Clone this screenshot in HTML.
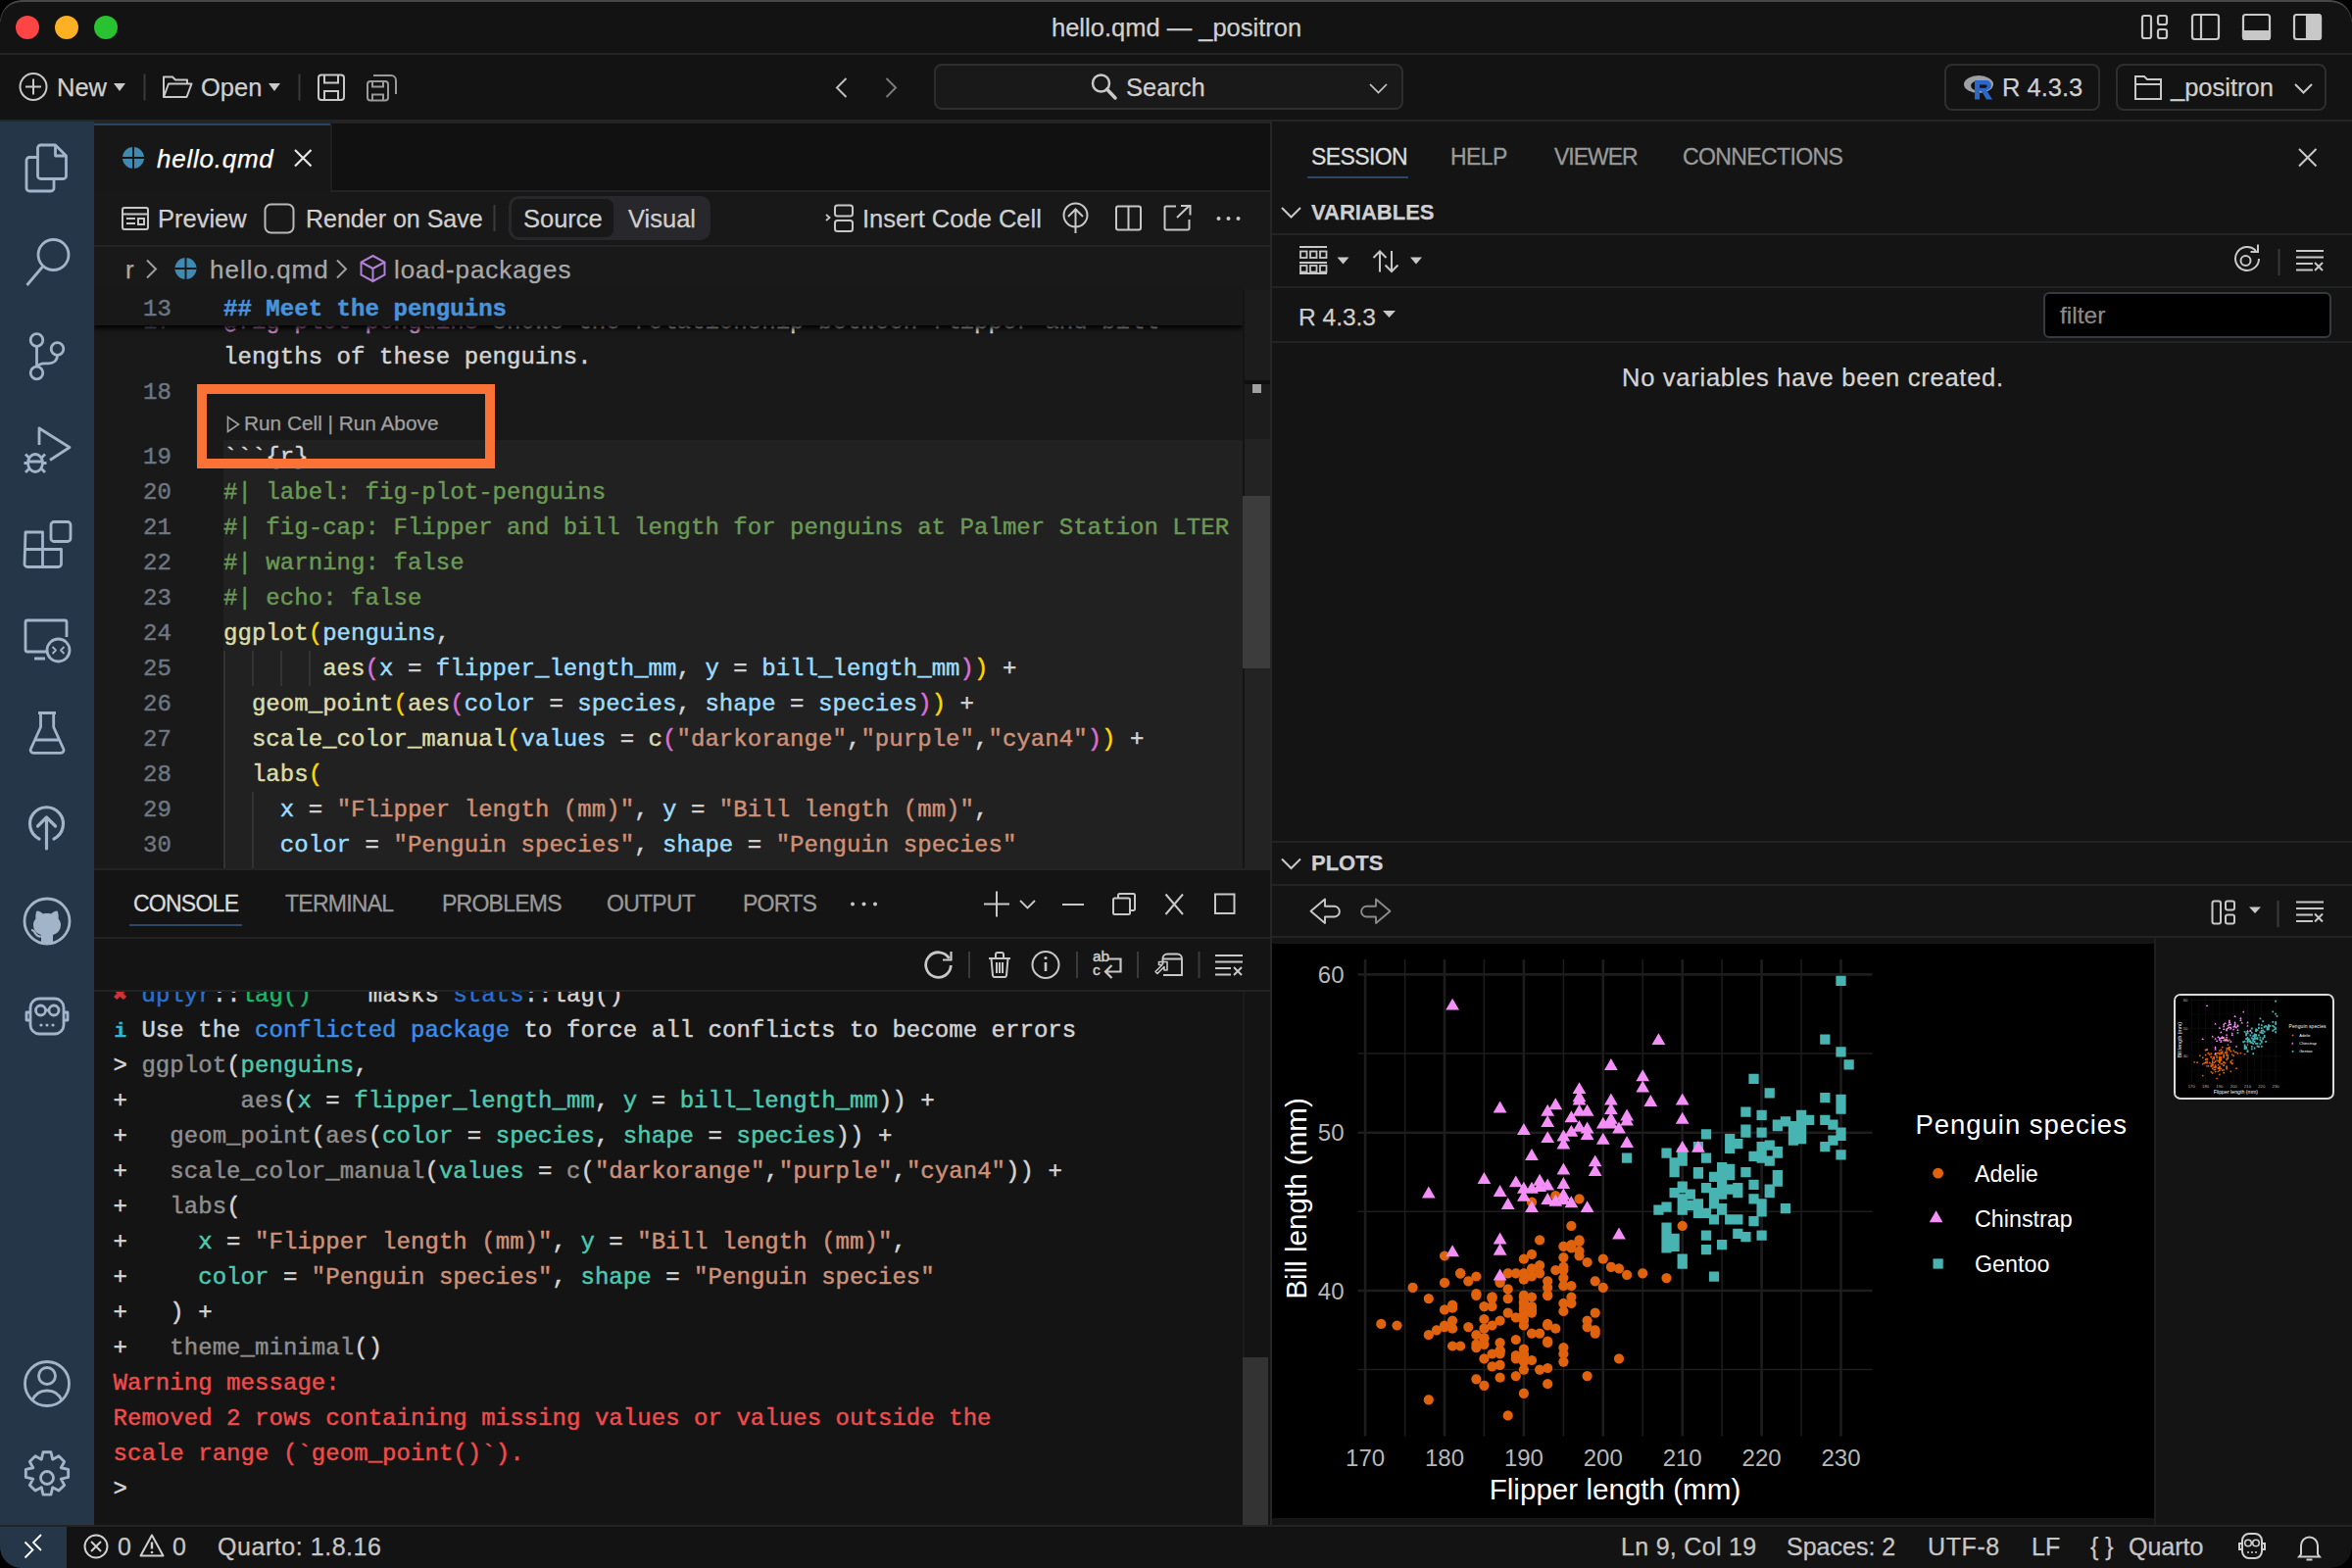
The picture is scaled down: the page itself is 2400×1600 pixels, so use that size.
<!DOCTYPE html>
<html><head><meta charset="utf-8">
<style>
*{margin:0;padding:0;box-sizing:border-box}
html,body{width:2400px;height:1600px;overflow:hidden;background:#000}
body{font-family:"Liberation Sans",sans-serif;color:#ccc}
.a{position:absolute}
#win{position:absolute;left:0;top:0;width:2400px;height:1600px;background:#131313;border-radius:22px;overflow:hidden}
.mono{font-family:"Liberation Mono",monospace;font-size:24px;white-space:pre;letter-spacing:0.05px;-webkit-text-stroke:0.45px currentColor}
.t{white-space:pre;line-height:1;-webkit-text-stroke:0.25px currentColor}
svg{position:absolute;overflow:visible}
</style></head><body>
<div id="win">
<!-- top window border -->

<!-- title bar -->
<div class="a" style="left:16px;top:16px;width:24px;height:24px;border-radius:50%;background:#fe4543"></div>
<div class="a" style="left:56px;top:16px;width:24px;height:24px;border-radius:50%;background:#feb024"></div>
<div class="a" style="left:96px;top:16px;width:24px;height:24px;border-radius:50%;background:#29c231"></div>
<div class="a t" id="title" style="left:1073px;top:16px;font-size:25.5px;color:#d0d0d0">hello.qmd — _positron</div>
<div class="a" style="left:0;top:54px;width:2400px;height:2px;background:#232323"></div>

<!-- toolbar -->
<svg style="left:0;top:0" width="2400" height="124" fill="none" stroke="#c8c8c8" stroke-width="2">
 <circle cx="34" cy="88.5" r="13.5"/>
 <path d="M26 88.5h16M34 80.5v16"/>
 <path d="M116 85h12l-6 8z" fill="#c8c8c8" stroke="none"/>
 <path d="M147.5 75.5v27" stroke="#3a3a3a"/>
 <path d="M167 99V78.5h9l3 3h12v4.5M167 99l5-13.5h23.5L190.5 99z" stroke-linejoin="round"/>
 <path d="M274 85h12l-6 8z" fill="#c8c8c8" stroke="none"/>
 <path d="M305.5 75.5v27" stroke="#3a3a3a"/>
 <rect x="325" y="76.5" width="26" height="25.5" rx="3"/>
 <path d="M331 76.5v8h14v-8M331 102v-9h14v9"/>
 <g stroke="#9a9a9a"><rect x="375" y="83" width="21" height="19.5" rx="3"/><path d="M380 83v5.5h11V83M380 102.5v-6h11v6M381 77h18a5 5 0 0 1 5 5v14"/></g>
 <path d="M863.5 80l-9.5 9.5 9.5 9.5" stroke="#c0c0c0"/><path d="M904.5 80l9.5 9.5-9.5 9.5" stroke="#7a7a7a"/>
 <circle cx="1123.5" cy="85" r="8.5" stroke-width="2.5"/>
 <path d="M1129.5 91l8.5 9" stroke-width="3.5" stroke-linecap="round"/>
 <path d="M1398 86l8.5 8.5 8.5-8.5"/>
</svg>
<div class="a" style="left:953px;top:65px;width:479px;height:47px;border:2px solid #2e2e2e;border-radius:8px;background:#191919"></div>
<svg style="left:0;top:0" width="2400" height="124" fill="none" stroke="#c8c8c8" stroke-width="2">
 <circle cx="1123.5" cy="85" r="8.5" stroke-width="2.5"/>
 <path d="M1129.5 91l8.5 9" stroke-width="3.5" stroke-linecap="round"/>
 <path d="M1398 86l8.5 8.5 8.5-8.5" stroke-width="1.7"/>
</svg>
<div class="a t" style="left:58px;top:77px;font-size:25.5px;color:#cfcfcf">New</div>
<div class="a t" style="left:205px;top:77px;font-size:25.5px;color:#cfcfcf">Open</div>
<div class="a t" style="left:1149px;top:77px;font-size:25.5px;color:#cfcfcf">Search</div>
<!-- layout icons top-right -->
<svg style="left:0;top:0" width="2400" height="60" fill="none" stroke="#c8c8c8" stroke-width="2.2">
 <rect x="2186" y="16" width="9" height="23" rx="2"/><rect x="2202" y="16" width="9" height="9" rx="2"/><rect x="2202" y="30" width="9" height="9" rx="2"/>
 <rect x="2237" y="15" width="27" height="25" rx="2.5"/><path d="M2246 15v25"/>
 <rect x="2289" y="15" width="27" height="25" rx="2.5"/><path d="M2289 32h27v6a2 2 0 0 1-2 2h-23a2 2 0 0 1-2-2z" fill="#c8c8c8"/>
 <rect x="2341" y="15" width="27" height="25" rx="2.5"/><path d="M2354 15h11.5a2.5 2.5 0 0 1 2.5 2.5v20a2.5 2.5 0 0 1-2.5 2.5H2354z" fill="#c8c8c8"/>
</svg>
<!-- R button & folder -->
<div class="a" style="left:1984px;top:65px;width:159px;height:48px;border:2px solid #2e2e2e;border-radius:8px"></div>
<div class="a" style="left:2159px;top:65px;width:215px;height:48px;border:2px solid #2e2e2e;border-radius:8px"></div>
<svg style="left:0;top:0" width="2400" height="124">
 <ellipse cx="2019" cy="86" rx="15" ry="9" fill="#9ea0a6"/>
 <ellipse cx="2021" cy="87.5" rx="10" ry="5.5" fill="#131313"/>
 <path d="M2015 82h12a5 5 0 0 1 0 10l6 9.5h-6l-5-8.5h-2v8.5h-5z" fill="#2a67c8"/>
 <path d="M2020 86.5h6a1.6 1.6 0 0 1 0 3.2h-6z" fill="#131313"/>
 <g fill="none" stroke="#c8c8c8" stroke-width="2"><path d="M2179 101V78h9l3 3h14v20zM2179 86h26"/><path d="M2342 86l8.5 8.5 8.5-8.5"/></g>
</svg>
<div class="a t" style="left:2043px;top:77px;font-size:25.5px;color:#cfcfcf">R 4.3.3</div>
<div class="a t" style="left:2215px;top:77px;font-size:25.5px;color:#cfcfcf">_positron</div>

<!-- toolbar bottom border -->
<div class="a" style="left:0;top:122px;width:2400px;height:2px;background:#252525"></div>

<!-- activity bar -->
<div class="a" style="left:0;top:124px;width:96px;height:1432px;background:#253648"></div>

<!-- activity icons -->
<svg style="left:0;top:0" width="96" height="1560" fill="none" stroke="#a2b4c7" stroke-width="2.8" stroke-linejoin="round">
 <path d="M38.5 160.5H30a3 3 0 0 0-3 3V192a3 3 0 0 0 3 3h22a3 3 0 0 0 3-3v-9.5"/>
 <path d="M38.5 151a3 3 0 0 1 3-3h15l11 11v20.5a3 3 0 0 1-3 3H41.5a3 3 0 0 1-3-3zM56.5 148v11h11"/>
 <circle cx="54.5" cy="260" r="15.5"/><path d="M44 271.5L27.5 291"/>
 <circle cx="37.5" cy="347" r="6.3"/><circle cx="37.5" cy="380.5" r="6.3"/><circle cx="58.5" cy="356" r="6.3"/>
 <path d="M37.5 353.3v21M58.5 362.3c0 6-4 8.5-9 8.5h-4c-4 0-7 2-8 4"/>
 <path d="M40 454V437l31 19.5-20 13"/>
 <ellipse cx="36" cy="472.5" rx="7.5" ry="9"/><path d="M28.5 471h15M24.5 472.5h4M43.5 472.5h4M26 463.5l4 4M46 463.5l-4 4M26 482l4-4M46 482l-4-4"/>
 <path d="M26 543h17.5v35.5H28a3 3 0 0 1-3-3zM25 560.5h37.5v15a3 3 0 0 1-3 3H43.5M43.5 543v35.5"/>
 <rect x="52" y="532.5" width="20" height="20" rx="3"/>
 <path d="M68 650V635a2 2 0 0 0-2-2H28a2 2 0 0 0-2 2v28a2 2 0 0 0 2 2h19M35 672h11"/>
 <circle cx="59.5" cy="663.5" r="11.5"/><path d="M53.5 660l3.5 3.5-3.5 3.5M65.5 660l-3.5 3.5 3.5 3.5" stroke-width="1.8"/>
 <path d="M39 727.5h18M41.5 727.5V742l-10 22a3 3 0 0 0 2.7 4.3h27.8a3 3 0 0 0 2.7-4.3l-10-22V727.5M35.5 755h25"/>
 <path d="M40 856a17 17 0 1 1 15 0M47.5 866V834M38.5 843l9-9 9 9" stroke-linecap="round" stroke-width="3.2"/>
 <circle cx="48" cy="940" r="23"/>
 <path d="M42 963v-9c-5-1.5-8-5-8-10.5 0-2.5 1-4.5 2.5-6-.5-2 0-6 1-8 2.5 0 5 1.5 6.5 3 2.5-.6 5.5-.6 8 0 1.5-1.5 4-3 6.5-3 1 2 1.5 6 1 8 1.5 1.5 2.5 3.5 2.5 6 0 5.5-3 9-8 10.5v9z" fill="#a2b4c7" stroke="none"/>
 <path d="M42 955.5c-4 .5-5.5-2-6.5-4s-2-2.5-3.5-2.5" stroke-width="2.2"/>
 <path d="M31 1028a9 9 0 0 1 9-9h16a9 9 0 0 1 9 9v18a9 9 0 0 1-9 9H40a9 9 0 0 1-9-9zM31 1033h-4v8h4M65 1033h4v8h-4"/>
 <circle cx="41.5" cy="1031" r="5"/><circle cx="55" cy="1031" r="5"/><path d="M46.5 1031h3.5"/>
 <circle cx="42" cy="1046" r="1.6" fill="#a2b4c7" stroke="none"/><circle cx="48" cy="1046" r="1.6" fill="#a2b4c7" stroke="none"/><circle cx="54" cy="1046" r="1.6" fill="#a2b4c7" stroke="none"/>
 <circle cx="48" cy="1412" r="22.5"/><circle cx="48" cy="1404" r="8.5"/><path d="M33 1429c3-7 8-10 15-10s12 3 15 10"/>
 <path d="M44.5 1485h7l1.5 6.5 5.5-3 5 5-3 5.5 6.5 1.5v7l-6.5 1.5 3 5.5-5 5-5.5-3-1.5 6.5h-7l-1.5-6.5-5.5 3-5-5 3-5.5-6.5-1.5v-7l6.5-1.5-3-5.5 5-5 5.5 3z" transform="translate(48 1508) scale(1.14) translate(-48 -1508)" stroke-width="2.5"/>
 <circle cx="48" cy="1508" r="6.5"/>
</svg>

<!-- status bar -->
<div class="a" style="left:0;top:1558px;width:68px;height:42px;background:#253648"></div>
<svg style="left:0;top:1556px" width="2400" height="44" fill="none" stroke="#d0d0d0" stroke-width="2">
 <path d="M25.5 17.5l8 8-8 8M42 10l-8 8 8 8" stroke="#fff" stroke-width="1.8"/>
 <circle cx="98" cy="22" r="11.5"/><path d="M93 17l10 10M103 17l-10 10"/>
 <path d="M155 10.5l-11.5 21h23z" stroke-linejoin="round"/><path d="M155 17.5v7" stroke-width="2.4"/><circle cx="155" cy="28" r="1.3" fill="#d0d0d0" stroke="none"/>
 <path d="M2288 16a7 7 0 0 1 7-7h6a7 7 0 0 1 7 7v11a7 7 0 0 1-7 7h-6a7 7 0 0 1-7-7zM2288 19h-3v6h3M2308 19h3v6h-3"/>
 <circle cx="2294" cy="18.5" r="3.3" stroke-width="1.6"/><circle cx="2302" cy="18.5" r="3.3" stroke-width="1.6"/>
 <circle cx="2294" cy="28" r="1" fill="#d0d0d0" stroke="none"/><circle cx="2298" cy="28" r="1" fill="#d0d0d0" stroke="none"/><circle cx="2302" cy="28" r="1" fill="#d0d0d0" stroke="none"/>
 <path d="M2348 30v-9a8.5 8.5 0 0 1 17 0v9l2 2.5h-21zM2353.5 35.5h6"/>
</svg>
<div class="a t" style="left:120px;top:1565.5px;font-size:25px;color:#c6c6c6">0</div>
<div class="a t" style="left:176px;top:1565.5px;font-size:25px;color:#c6c6c6">0</div>
<div class="a t" style="left:222px;top:1565.5px;font-size:25px;letter-spacing:0.55px;color:#c6c6c6">Quarto: 1.8.16</div>
<div class="a t" style="left:1654px;top:1565.5px;font-size:25px;letter-spacing:0.3px;color:#c6c6c6">Ln 9, Col 19</div>
<div class="a t" style="left:1823px;top:1565.5px;font-size:25px;color:#c6c6c6">Spaces: 2</div>
<div class="a t" style="left:1967px;top:1565.5px;font-size:25px;letter-spacing:0.6px;color:#c6c6c6">UTF-8</div>
<div class="a t" style="left:2073px;top:1565.5px;font-size:25px;color:#c6c6c6">LF</div>
<div class="a t" style="left:2133px;top:1565.5px;font-size:25px;color:#c6c6c6">{ }</div>
<div class="a t" style="left:2172px;top:1565.5px;font-size:25px;color:#c6c6c6">Quarto</div>
<div class="a" style="left:0;top:1556px;width:2400px;height:2px;background:#232323"></div>

<!-- editor region -->
<div class="a" style="left:96px;top:124px;width:1200px;height:72px;background:#111111"></div>
<div class="a" style="left:337px;top:194px;width:959px;height:2px;background:#232323"></div>
<div class="a" style="left:96px;top:196px;width:1200px;height:56px;background:#181818"></div>
<div class="a" style="left:96px;top:250px;width:1200px;height:2px;background:#232323"></div>
<div class="a" style="left:96px;top:252px;width:1200px;height:634px;background:#191919"></div>

<!-- editor tab -->
<div class="a" style="left:96px;top:122px;width:1200px;height:4px;background:#242424"></div>
<div class="a" style="left:96px;top:126px;width:241px;height:2px;background:#2a4561"></div>
<div class="a" style="left:96px;top:128px;width:241px;height:68px;background:#171717"></div>
<div class="a" style="left:337px;top:126px;width:2px;height:68px;background:#1e1e1e"></div>
<svg style="left:0;top:0" width="1300" height="300">
 <circle cx="136" cy="161" r="11" fill="#3f8ab1"/>
 <path d="M136 150v22M125 161h22" stroke="#161616" stroke-width="2"/>
 <path d="M301 153l16.5 16.5M317.5 153L301 169.5" stroke="#e8e8e8" stroke-width="2.2"/>
</svg>
<div class="a t" style="left:160px;top:149px;font-size:26px;letter-spacing:0.76px;font-style:italic;color:#fff">hello.qmd</div>
<!-- editor toolbar -->
<svg style="left:0;top:0" width="1300" height="300" fill="none" stroke="#c8c8c8" stroke-width="2">
 <rect x="125" y="212" width="26" height="22" rx="2"/>
 <path d="M125 218.5h26M129 223h9M129 228h9M141 223h6v6h-6z"/>
 <rect x="270.5" y="208.5" width="29" height="29" rx="6" stroke="#b8b8b8"/>
 <path d="M504.5 209v27" stroke="#3a3a3a"/>
 <path d="M843 219l3.5 3-3.5 3" stroke-width="1.8"/>
 <rect x="852" y="209.5" width="18" height="11" rx="2.5"/><rect x="852" y="225" width="18" height="11" rx="2.5"/>
 <circle cx="1097.5" cy="219.5" r="12"/>
 <path d="M1097.5 238v-24M1090 221l7.5-7.5 7.5 7.5"/>
 <rect x="1139" y="210.5" width="25" height="24" rx="2"/><path d="M1151.5 210.5v24"/>
 <path d="M1200 210.5h-10a1.5 1.5 0 0 0-1.5 1.5v21a1.5 1.5 0 0 0 1.5 1.5h22a1.5 1.5 0 0 0 1.5-1.5v-9M1201 222l13-12.5M1205 210h9.5v9.5"/>
 <circle cx="1243.5" cy="223" r="2" fill="#c8c8c8" stroke="none"/><circle cx="1253.5" cy="223" r="2" fill="#c8c8c8" stroke="none"/><circle cx="1263.5" cy="223" r="2" fill="#c8c8c8" stroke="none"/>
</svg>
<div class="a" style="left:519px;top:200px;width:206px;height:45px;border-radius:10px;background:#27272c"></div>
<div class="a" style="left:522px;top:203px;width:104px;height:39px;border-radius:8px;background:#181818"></div>
<div class="a t" style="left:161px;top:211px;font-size:25.5px;color:#cfcfcf">Preview</div>
<div class="a t" style="left:312px;top:211px;font-size:25px;color:#cfcfcf">Render on Save</div>
<div class="a t" style="left:534px;top:211px;font-size:25.5px;color:#cfcfcf">Source</div>
<div class="a t" style="left:641px;top:211px;font-size:25.5px;color:#cfcfcf">Visual</div>
<div class="a t" style="left:880px;top:211px;font-size:25.5px;color:#cfcfcf">Insert Code Cell</div>
<!-- breadcrumbs -->
<svg style="left:0;top:2px" width="1300" height="300" fill="none" stroke="#a0a0a0" stroke-width="2">
 <path d="M150 263.5l9 9-9 9M344 263.5l9 9-9 9"/>
 <circle cx="189.5" cy="272" r="11" fill="#3f8ab1" stroke="none"/>
 <path d="M189.5 261v22M178.5 272h22" stroke="#191919"/>
 <path d="M380.5 259l12 6.5v13l-12 6.5-12-6.5v-13zM368.5 265.5l12 6.5 12-6.5M380.5 272v13" stroke="#b180d7"/>
</svg>
<div class="a t" style="left:128px;top:261.5px;font-size:26px;color:#a8a8a8">r</div>
<div class="a t" style="left:214px;top:261.5px;font-size:26px;letter-spacing:1px;color:#a8a8a8">hello.qmd</div>
<div class="a t" style="left:402px;top:261.5px;font-size:26px;letter-spacing:0.94px;color:#a8a8a8">load-packages</div>

<!-- editor code -->
<div class="a" style="left:96px;top:290px;width:1172px;height:596px;overflow:hidden">
<div class="a" style="left:132px;top:159px;width:1040px;height:437px;background:#212121"></div>
<div class="a" style="left:132px;top:374px;width:2px;height:222px;background:#333"></div>
<div class="a" style="left:161px;top:374px;width:2px;height:36px;background:#333"></div>
<div class="a" style="left:190px;top:374px;width:2px;height:36px;background:#333"></div>
<div class="a" style="left:219px;top:374px;width:2px;height:36px;background:#333"></div>
<div class="a" style="left:161px;top:518px;width:2px;height:78px;background:#333"></div>
<div class="a mono" style="left:0;top:21px;width:79px;text-align:right;line-height:36px;color:#6e7681">17</div>
<div class="a mono" style="left:132px;top:21px;line-height:36px;color:#d4d4d4"><span style="color:#c586c0">@fig-plot-penguins</span><span style="color:#d4d4d4"> shows the relationship between flipper and bill</span></div>
<div class="a mono" style="left:132px;top:57px;line-height:36px;color:#d4d4d4"><span style="color:#d4d4d4">lengths of these penguins.</span></div>
<div class="a mono" style="left:0;top:93px;width:79px;text-align:right;line-height:36px;color:#6e7681">18</div>
<div class="a mono" style="left:0;top:159px;width:79px;text-align:right;line-height:36px;color:#6e7681">19</div>
<div class="a mono" style="left:132px;top:159px;line-height:36px;color:#d4d4d4"><span style="color:#d4d4d4">```{r}</span></div>
<div class="a mono" style="left:0;top:195px;width:79px;text-align:right;line-height:36px;color:#6e7681">20</div>
<div class="a mono" style="left:132px;top:195px;line-height:36px;color:#d4d4d4"><span style="color:#6a9955">#| label: fig-plot-penguins</span></div>
<div class="a mono" style="left:0;top:231px;width:79px;text-align:right;line-height:36px;color:#6e7681">21</div>
<div class="a mono" style="left:132px;top:231px;line-height:36px;color:#d4d4d4"><span style="color:#6a9955">#| fig-cap: Flipper and bill length for penguins at Palmer Station LTER</span></div>
<div class="a mono" style="left:0;top:267px;width:79px;text-align:right;line-height:36px;color:#6e7681">22</div>
<div class="a mono" style="left:132px;top:267px;line-height:36px;color:#d4d4d4"><span style="color:#6a9955">#| warning: false</span></div>
<div class="a mono" style="left:0;top:303px;width:79px;text-align:right;line-height:36px;color:#6e7681">23</div>
<div class="a mono" style="left:132px;top:303px;line-height:36px;color:#d4d4d4"><span style="color:#6a9955">#| echo: false</span></div>
<div class="a mono" style="left:0;top:339px;width:79px;text-align:right;line-height:36px;color:#6e7681">24</div>
<div class="a mono" style="left:132px;top:339px;line-height:36px;color:#d4d4d4"><span style="color:#dcdcaa">ggplot</span><span style="color:#ffd700">(</span><span style="color:#9cdcfe">penguins</span><span style="color:#d4d4d4">,</span></div>
<div class="a mono" style="left:0;top:375px;width:79px;text-align:right;line-height:36px;color:#6e7681">25</div>
<div class="a mono" style="left:132px;top:375px;line-height:36px;color:#d4d4d4">       <span style="color:#dcdcaa">aes</span><span style="color:#da70d6">(</span><span style="color:#9cdcfe">x</span><span style="color:#d4d4d4"> = </span><span style="color:#9cdcfe">flipper_length_mm</span><span style="color:#d4d4d4">, </span><span style="color:#9cdcfe">y</span><span style="color:#d4d4d4"> = </span><span style="color:#9cdcfe">bill_length_mm</span><span style="color:#da70d6">)</span><span style="color:#ffd700">)</span><span style="color:#d4d4d4"> +</span></div>
<div class="a mono" style="left:0;top:411px;width:79px;text-align:right;line-height:36px;color:#6e7681">26</div>
<div class="a mono" style="left:132px;top:411px;line-height:36px;color:#d4d4d4">  <span style="color:#dcdcaa">geom_point</span><span style="color:#ffd700">(</span><span style="color:#dcdcaa">aes</span><span style="color:#da70d6">(</span><span style="color:#9cdcfe">color</span><span style="color:#d4d4d4"> = </span><span style="color:#9cdcfe">species</span><span style="color:#d4d4d4">, </span><span style="color:#9cdcfe">shape</span><span style="color:#d4d4d4"> = </span><span style="color:#9cdcfe">species</span><span style="color:#da70d6">)</span><span style="color:#ffd700">)</span><span style="color:#d4d4d4"> +</span></div>
<div class="a mono" style="left:0;top:447px;width:79px;text-align:right;line-height:36px;color:#6e7681">27</div>
<div class="a mono" style="left:132px;top:447px;line-height:36px;color:#d4d4d4">  <span style="color:#dcdcaa">scale_color_manual</span><span style="color:#ffd700">(</span><span style="color:#9cdcfe">values</span><span style="color:#d4d4d4"> = </span><span style="color:#dcdcaa">c</span><span style="color:#da70d6">(</span><span style="color:#ce9178">"darkorange"</span><span style="color:#d4d4d4">,</span><span style="color:#ce9178">"purple"</span><span style="color:#d4d4d4">,</span><span style="color:#ce9178">"cyan4"</span><span style="color:#da70d6">)</span><span style="color:#ffd700">)</span><span style="color:#d4d4d4"> +</span></div>
<div class="a mono" style="left:0;top:483px;width:79px;text-align:right;line-height:36px;color:#6e7681">28</div>
<div class="a mono" style="left:132px;top:483px;line-height:36px;color:#d4d4d4">  <span style="color:#dcdcaa">labs</span><span style="color:#ffd700">(</span></div>
<div class="a mono" style="left:0;top:519px;width:79px;text-align:right;line-height:36px;color:#6e7681">29</div>
<div class="a mono" style="left:132px;top:519px;line-height:36px;color:#d4d4d4">    <span style="color:#9cdcfe">x</span><span style="color:#d4d4d4"> = </span><span style="color:#ce9178">"Flipper length (mm)"</span><span style="color:#d4d4d4">, </span><span style="color:#9cdcfe">y</span><span style="color:#d4d4d4"> = </span><span style="color:#ce9178">"Bill length (mm)"</span><span style="color:#d4d4d4">,</span></div>
<div class="a mono" style="left:0;top:555px;width:79px;text-align:right;line-height:36px;color:#6e7681">30</div>
<div class="a mono" style="left:132px;top:555px;line-height:36px;color:#d4d4d4">    <span style="color:#9cdcfe">color</span><span style="color:#d4d4d4"> = </span><span style="color:#ce9178">"Penguin species"</span><span style="color:#d4d4d4">, </span><span style="color:#9cdcfe">shape</span><span style="color:#d4d4d4"> = </span><span style="color:#ce9178">"Penguin species"</span></div>
<div class="a t" style="left:153px;top:132px;font-size:20.8px;color:#a0a0a0">Run Cell | Run Above</div>
<svg style="left:0;top:0" width="1172" height="596"><path d="M136.5 135.5v15l11-7.5z" fill="none" stroke="#a0a0a0" stroke-width="1.6"/></svg>
<div class="a" style="left:0;top:0px;width:1172px;height:42px;background:#181818;box-shadow:0 3px 5px #000"></div>
<div class="a mono" style="left:0;top:8px;width:79px;text-align:right;line-height:36px;color:#6e7681">13</div>
<div class="a mono" style="left:132px;top:8px;line-height:36px;color:#4893dd;font-weight:bold">## Meet the penguins</div>
</div>
<div class="a" style="left:1268px;top:296px;width:28px;height:590px;background:#1c1c1c;border-left:2px solid #141414"></div>
<div class="a" style="left:1270px;top:448px;width:26px;height:438px;background:#232323"></div>
<div class="a" style="left:1268px;top:506px;width:28px;height:176px;background:#3c3c3c"></div>
<div class="a" style="left:1270px;top:388px;width:26px;height:4px;background:#0e0e0e"></div>
<div class="a" style="left:1278px;top:392px;width:9px;height:9px;background:#a0a0a0"></div>
<div class="a" style="left:201px;top:392px;width:304px;height:86px;border:10.5px solid #fb7236"></div>

<!-- panel -->
<div class="a" style="left:96px;top:886px;width:1200px;height:2px;background:#232323"></div>
<div class="a" style="left:96px;top:888px;width:1200px;height:668px;background:#141414"></div>
<div class="a" style="left:96px;top:956px;width:1200px;height:2px;background:#232323"></div>
<div class="a" style="left:96px;top:1010px;width:1200px;height:2px;background:#232323"></div>

<!-- panel content -->
<div class="a t" style="left:136px;top:910.5px;font-size:23px;letter-spacing:-0.75px;color:#dcdcdc;-webkit-text-stroke:0.3px #dcdcdc">CONSOLE</div>
<div class="a" style="left:132px;top:943px;width:115px;height:2px;background:#2d4866"></div>
<div class="a t" style="left:291px;top:910.5px;font-size:23px;letter-spacing:-0.75px;color:#9a9a9a;-webkit-text-stroke:0.3px #9a9a9a">TERMINAL</div>
<div class="a t" style="left:451px;top:910.5px;font-size:23px;letter-spacing:-0.75px;color:#9a9a9a;-webkit-text-stroke:0.3px #9a9a9a">PROBLEMS</div>
<div class="a t" style="left:619px;top:910.5px;font-size:23px;letter-spacing:-0.75px;color:#9a9a9a;-webkit-text-stroke:0.3px #9a9a9a">OUTPUT</div>
<div class="a t" style="left:758px;top:910.5px;font-size:23px;letter-spacing:-0.75px;color:#9a9a9a;-webkit-text-stroke:0.3px #9a9a9a">PORTS</div>
<svg style="left:0;top:0" width="1300" height="1560" fill="none" stroke="#c8c8c8" stroke-width="2">
 <circle cx="870" cy="922.5" r="2" fill="#c8c8c8" stroke="none"/><circle cx="881.5" cy="922.5" r="2" fill="#c8c8c8" stroke="none"/><circle cx="893" cy="922.5" r="2" fill="#c8c8c8" stroke="none"/>
 <path d="M1004 922.5h26M1017 909.5v26"/>
 <path d="M1041 919l7.5 7.5 7.5-7.5" stroke-width="1.8"/>
 <path d="M1084 923h22"/>
 <rect x="1136" y="916.5" width="17" height="16.5" rx="1.5"/><path d="M1141 916.5v-3a1.5 1.5 0 0 1 1.5-1.5h14a1.5 1.5 0 0 1 1.5 1.5v14a1.5 1.5 0 0 1-1.5 1.5H1153"/>
 <path d="M1189.5 912.5l17.5 20.5M1207 912.5l-17.5 20.5"/>
 <rect x="1240" y="912.5" width="19.5" height="19.5"/>
 <path d="M968.5 978a12.8 12.8 0 1 0 1.8 7" stroke-width="2.8"/><path d="M970.5 971v8.5h-8.5" stroke-width="2.2"/>
 <path d="M989 971v27M1099 971v27M1161 971v27M1223.5 971v27" stroke="#3a3a3a"/>
 <path d="M1009 978h22M1016 978v-4a2 2 0 0 1 2-2h4a2 2 0 0 1 2 2v4M1011.5 978l1.5 17.5a2 2 0 0 0 2 1.5h10a2 2 0 0 0 2-1.5l1.5-17.5M1017 982v11M1020 982v11M1023 982v11"/>
 <circle cx="1067" cy="984.5" r="13.5"/><path d="M1067 982v9" stroke-width="2.6"/><circle cx="1067" cy="977.5" r="1.6" fill="#c8c8c8" stroke="none"/>
 <path d="M1131 978.5h12.5v13h-15M1134.5 985l-6.5 6.5 6.5 6.5" stroke-width="2.2"/>
 <path d="M1186.5 984v-6a4.5 4.5 0 0 1 4.5-4.5h10.5a4.5 4.5 0 0 1 4.5 4.5v17h-19M1186.5 978.5h19.5" stroke-width="1.9"/><path d="M1179 991.5l7-7h-3.5v-3h8.5v8.5h-3v-3.5l-7 7z" stroke-width="1.6" stroke-linejoin="round"/>
 <path d="M1240 975h28M1240 981.5h28M1240 988h16M1240 994.5h16M1259 987l8 8M1267 987l-8 8"/>
</svg>
<div class="a t" style="left:1115px;top:968.5px;font-size:15.5px;color:#d0d0d0;line-height:14px;-webkit-text-stroke:0.4px #d0d0d0">ab<br>c</div>
<div class="a" style="left:96px;top:1012px;width:1172px;height:544px;overflow:hidden">
<div class="a mono" style="left:19.5px;top:-14.4px;line-height:36px"><span style="color:#d03434">✖</span> <span style="color:#2a6fd0">dplyr</span><span style="color:#d4d4d4">::</span><span style="color:#19b86a">lag()</span><span style="color:#d4d4d4">    masks </span><span style="color:#2a6fd0">stats</span><span style="color:#d4d4d4">::lag()</span></div>
<div class="a mono" style="left:19.5px;top:21.6px;line-height:36px"><span style="color:#29b8db;font-weight:bold;font-size:21px;display:inline-block;width:14.45px;text-align:center">i</span><span style="color:#d4d4d4"> Use the </span><span style="color:#3b8eea">conflicted package</span><span style="color:#d4d4d4"> to force all conflicts to become errors</span></div>
<div class="a mono" style="left:19.5px;top:57.6px;line-height:36px"><span style="color:#d4d4d4">> </span><span style="color:#8e8e8e">ggplot</span><span style="color:#d4d4d4">(</span><span style="color:#4ec9b0">penguins</span><span style="color:#d4d4d4">,</span></div>
<div class="a mono" style="left:19.5px;top:93.6px;line-height:36px"><span style="color:#d4d4d4">+        </span><span style="color:#8e8e8e">aes</span><span style="color:#d4d4d4">(</span><span style="color:#4ec9b0">x</span><span style="color:#d4d4d4"> = </span><span style="color:#4ec9b0">flipper_length_mm</span><span style="color:#d4d4d4">, </span><span style="color:#4ec9b0">y</span><span style="color:#d4d4d4"> = </span><span style="color:#4ec9b0">bill_length_mm</span><span style="color:#d4d4d4">)) +</span></div>
<div class="a mono" style="left:19.5px;top:129.6px;line-height:36px"><span style="color:#d4d4d4">+   </span><span style="color:#8e8e8e">geom_point</span><span style="color:#d4d4d4">(</span><span style="color:#8e8e8e">aes</span><span style="color:#d4d4d4">(</span><span style="color:#4ec9b0">color</span><span style="color:#d4d4d4"> = </span><span style="color:#4ec9b0">species</span><span style="color:#d4d4d4">, </span><span style="color:#4ec9b0">shape</span><span style="color:#d4d4d4"> = </span><span style="color:#4ec9b0">species</span><span style="color:#d4d4d4">)) +</span></div>
<div class="a mono" style="left:19.5px;top:165.6px;line-height:36px"><span style="color:#d4d4d4">+   </span><span style="color:#8e8e8e">scale_color_manual</span><span style="color:#d4d4d4">(</span><span style="color:#4ec9b0">values</span><span style="color:#d4d4d4"> = </span><span style="color:#8e8e8e">c</span><span style="color:#d4d4d4">(</span><span style="color:#ce9178">"darkorange"</span><span style="color:#d4d4d4">,</span><span style="color:#ce9178">"purple"</span><span style="color:#d4d4d4">,</span><span style="color:#ce9178">"cyan4"</span><span style="color:#d4d4d4">)) +</span></div>
<div class="a mono" style="left:19.5px;top:201.6px;line-height:36px"><span style="color:#d4d4d4">+   </span><span style="color:#8e8e8e">labs</span><span style="color:#d4d4d4">(</span></div>
<div class="a mono" style="left:19.5px;top:237.6px;line-height:36px"><span style="color:#d4d4d4">+     </span><span style="color:#4ec9b0">x</span><span style="color:#d4d4d4"> = </span><span style="color:#ce9178">"Flipper length (mm)"</span><span style="color:#d4d4d4">, </span><span style="color:#4ec9b0">y</span><span style="color:#d4d4d4"> = </span><span style="color:#ce9178">"Bill length (mm)"</span><span style="color:#d4d4d4">,</span></div>
<div class="a mono" style="left:19.5px;top:273.6px;line-height:36px"><span style="color:#d4d4d4">+     </span><span style="color:#4ec9b0">color</span><span style="color:#d4d4d4"> = </span><span style="color:#ce9178">"Penguin species"</span><span style="color:#d4d4d4">, </span><span style="color:#4ec9b0">shape</span><span style="color:#d4d4d4"> = </span><span style="color:#ce9178">"Penguin species"</span></div>
<div class="a mono" style="left:19.5px;top:309.6px;line-height:36px"><span style="color:#d4d4d4">+   ) +</span></div>
<div class="a mono" style="left:19.5px;top:345.6px;line-height:36px"><span style="color:#d4d4d4">+   </span><span style="color:#8e8e8e">theme_minimal</span><span style="color:#d4d4d4">()</span></div>
<div class="a mono" style="left:19.5px;top:381.6px;line-height:36px"><span style="color:#f14c4c">Warning message:</span></div>
<div class="a mono" style="left:19.5px;top:417.6px;line-height:36px"><span style="color:#f14c4c">Removed 2 rows containing missing values or values outside the</span></div>
<div class="a mono" style="left:19.5px;top:453.6px;line-height:36px"><span style="color:#f14c4c">scale range (`geom_point()`).</span></div>
<div class="a mono" style="left:19.5px;top:489.6px;line-height:36px"><span style="color:#d4d4d4">></span></div>
</div>
<div class="a" style="left:1268px;top:1012px;width:2px;height:544px;background:#1c1c1c"></div>
<div class="a" style="left:1268px;top:1385px;width:26px;height:171px;background:#333"></div>

<!-- vertical split -->
<div class="a" style="left:1296px;top:124px;width:2px;height:1432px;background:#262626"></div>

<!-- right panel -->
<div class="a" style="left:1298px;top:124px;width:1102px;height:1432px;background:#141414"></div>
<div class="a" style="left:1298px;top:238px;width:1102px;height:2px;background:#232323"></div>
<div class="a" style="left:1298px;top:292px;width:1102px;height:2px;background:#232323"></div>
<div class="a" style="left:1298px;top:348px;width:1102px;height:2px;background:#232323"></div>
<div class="a" style="left:1298px;top:858px;width:1102px;height:2px;background:#232323"></div>
<div class="a" style="left:1298px;top:902px;width:1102px;height:2px;background:#232323"></div>
<div class="a" style="left:1298px;top:955px;width:1102px;height:2px;background:#232323"></div>
<div class="a" style="left:1298px;top:963px;width:900px;height:586px;background:#000"></div>
<div class="a" style="left:2198px;top:957px;width:2px;height:599px;background:#1f1f1f"></div>

<!-- plot -->
<svg style="left:1298px;top:963px" width="900" height="586"><g id="plotg">
<rect width="900" height="586" fill="#000"/>
<g stroke="#1d1d1d" fill="none"><path d="M95.1 16V502.6" stroke-width="2.6"/><path d="M176.0 16V502.6" stroke-width="2.6"/><path d="M256.9 16V502.6" stroke-width="2.6"/><path d="M337.8 16V502.6" stroke-width="2.6"/><path d="M418.7 16V502.6" stroke-width="2.6"/><path d="M499.6 16V502.6" stroke-width="2.6"/><path d="M580.5 16V502.6" stroke-width="2.6"/><path d="M135.6 16V502.6" stroke-width="1.5"/><path d="M216.4 16V502.6" stroke-width="1.5"/><path d="M297.4 16V502.6" stroke-width="1.5"/><path d="M378.2 16V502.6" stroke-width="1.5"/><path d="M459.1 16V502.6" stroke-width="1.5"/><path d="M540.0 16V502.6" stroke-width="1.5"/><path d="M87.5 354.0H612.6" stroke-width="2.6"/><path d="M87.5 192.7H612.6" stroke-width="2.6"/><path d="M87.5 31.4H612.6" stroke-width="2.6"/><path d="M87.5 434.6H612.6" stroke-width="1.5"/><path d="M87.5 273.3H612.6" stroke-width="1.5"/><path d="M87.5 112.0H612.6" stroke-width="1.5"/></g>
<g fill="#e0620c"><circle cx="184.1" cy="368.5" r="5.12"/><circle cx="224.5" cy="362.1" r="5.12"/><circle cx="297.4" cy="349.2" r="5.12"/><circle cx="281.2" cy="407.2" r="5.12"/><circle cx="256.9" cy="365.3" r="5.12"/><circle cx="184.1" cy="371.7" r="5.12"/><circle cx="297.4" cy="366.9" r="5.12"/><circle cx="281.2" cy="449.2" r="5.12"/><circle cx="256.9" cy="321.7" r="5.12"/><circle cx="224.5" cy="389.5" r="5.12"/><circle cx="176.0" cy="389.5" r="5.12"/><circle cx="192.2" cy="336.3" r="5.12"/><circle cx="265.0" cy="376.6" r="5.12"/><circle cx="321.6" cy="441.1" r="5.12"/><circle cx="216.4" cy="408.8" r="5.12"/><circle cx="297.4" cy="375.0" r="5.12"/><circle cx="313.5" cy="313.7" r="5.12"/><circle cx="208.4" cy="444.3" r="5.12"/><circle cx="289.3" cy="257.2" r="5.12"/><circle cx="127.5" cy="389.5" r="5.12"/><circle cx="176.0" cy="391.1" r="5.12"/><circle cx="248.8" cy="420.1" r="5.12"/><circle cx="216.4" cy="383.0" r="5.12"/><circle cx="176.0" cy="373.4" r="5.12"/><circle cx="232.6" cy="429.8" r="5.12"/><circle cx="200.3" cy="344.3" r="5.12"/><circle cx="232.6" cy="345.9" r="5.12"/><circle cx="111.3" cy="387.9" r="5.12"/><circle cx="176.0" cy="345.9" r="5.12"/><circle cx="159.8" cy="362.1" r="5.12"/><circle cx="159.8" cy="399.2" r="5.12"/><circle cx="240.7" cy="362.1" r="5.12"/><circle cx="208.4" cy="339.5" r="5.12"/><circle cx="297.4" cy="412.1" r="5.12"/><circle cx="305.4" cy="366.9" r="5.12"/><circle cx="256.9" cy="373.4" r="5.12"/><circle cx="176.0" cy="318.5" r="5.12"/><circle cx="184.1" cy="392.7" r="5.12"/><circle cx="208.4" cy="357.2" r="5.12"/><circle cx="192.2" cy="410.5" r="5.12"/><circle cx="297.4" cy="341.1" r="5.12"/><circle cx="224.5" cy="418.5" r="5.12"/><circle cx="305.4" cy="287.9" r="5.12"/><circle cx="216.4" cy="402.4" r="5.12"/><circle cx="256.9" cy="360.5" r="5.12"/><circle cx="192.2" cy="336.3" r="5.12"/><circle cx="167.9" cy="394.3" r="5.12"/><circle cx="256.9" cy="418.5" r="5.12"/><circle cx="265.0" cy="316.9" r="5.12"/><circle cx="224.5" cy="360.5" r="5.12"/><circle cx="240.7" cy="352.4" r="5.12"/><circle cx="256.9" cy="434.6" r="5.12"/><circle cx="337.8" cy="321.7" r="5.12"/><circle cx="232.6" cy="442.7" r="5.12"/><circle cx="265.0" cy="331.4" r="5.12"/><circle cx="224.5" cy="370.1" r="5.12"/><circle cx="281.2" cy="344.3" r="5.12"/><circle cx="184.1" cy="410.5" r="5.12"/><circle cx="289.3" cy="392.7" r="5.12"/><circle cx="216.4" cy="423.4" r="5.12"/><circle cx="297.4" cy="333.0" r="5.12"/><circle cx="216.4" cy="392.7" r="5.12"/><circle cx="273.1" cy="336.3" r="5.12"/><circle cx="208.4" cy="412.1" r="5.12"/><circle cx="273.1" cy="328.2" r="5.12"/><circle cx="297.4" cy="426.6" r="5.12"/><circle cx="240.7" cy="336.3" r="5.12"/><circle cx="256.9" cy="420.1" r="5.12"/><circle cx="321.6" cy="325.0" r="5.12"/><circle cx="256.9" cy="458.8" r="5.12"/><circle cx="256.9" cy="358.8" r="5.12"/><circle cx="305.4" cy="360.5" r="5.12"/><circle cx="313.5" cy="260.4" r="5.12"/><circle cx="256.9" cy="426.6" r="5.12"/><circle cx="297.4" cy="308.8" r="5.12"/><circle cx="265.0" cy="339.5" r="5.12"/><circle cx="208.4" cy="399.2" r="5.12"/><circle cx="232.6" cy="415.3" r="5.12"/><circle cx="297.4" cy="320.1" r="5.12"/><circle cx="248.8" cy="441.1" r="5.12"/><circle cx="305.4" cy="307.2" r="5.12"/><circle cx="232.6" cy="407.2" r="5.12"/><circle cx="281.2" cy="433.0" r="5.12"/><circle cx="265.0" cy="397.6" r="5.12"/><circle cx="289.3" cy="333.0" r="5.12"/><circle cx="256.9" cy="413.7" r="5.12"/><circle cx="248.8" cy="404.0" r="5.12"/><circle cx="248.8" cy="381.4" r="5.12"/><circle cx="256.9" cy="371.7" r="5.12"/><circle cx="354.0" cy="423.4" r="5.12"/><circle cx="378.2" cy="336.3" r="5.12"/><circle cx="216.4" cy="450.8" r="5.12"/><circle cx="224.5" cy="360.5" r="5.12"/><circle cx="232.6" cy="415.3" r="5.12"/><circle cx="402.5" cy="341.1" r="5.12"/><circle cx="256.9" cy="384.6" r="5.12"/><circle cx="305.4" cy="349.2" r="5.12"/><circle cx="159.8" cy="465.3" r="5.12"/><circle cx="273.1" cy="302.4" r="5.12"/><circle cx="273.1" cy="434.6" r="5.12"/><circle cx="362.1" cy="337.9" r="5.12"/><circle cx="200.3" cy="391.1" r="5.12"/><circle cx="256.9" cy="389.5" r="5.12"/><circle cx="281.2" cy="387.9" r="5.12"/><circle cx="208.4" cy="358.8" r="5.12"/><circle cx="329.7" cy="376.6" r="5.12"/><circle cx="256.9" cy="383.0" r="5.12"/><circle cx="184.1" cy="384.6" r="5.12"/><circle cx="313.5" cy="302.4" r="5.12"/><circle cx="321.6" cy="384.6" r="5.12"/><circle cx="265.0" cy="263.7" r="5.12"/><circle cx="281.2" cy="358.8" r="5.12"/><circle cx="313.5" cy="318.5" r="5.12"/><circle cx="265.0" cy="360.5" r="5.12"/><circle cx="305.4" cy="310.4" r="5.12"/><circle cx="240.7" cy="376.6" r="5.12"/><circle cx="329.7" cy="397.6" r="5.12"/><circle cx="248.8" cy="423.4" r="5.12"/><circle cx="248.8" cy="336.3" r="5.12"/><circle cx="232.6" cy="415.3" r="5.12"/><circle cx="321.6" cy="391.1" r="5.12"/><circle cx="143.6" cy="350.8" r="5.12"/><circle cx="354.0" cy="331.4" r="5.12"/><circle cx="224.5" cy="431.4" r="5.12"/><circle cx="329.7" cy="344.3" r="5.12"/><circle cx="265.0" cy="373.4" r="5.12"/><circle cx="297.4" cy="329.8" r="5.12"/><circle cx="265.0" cy="370.1" r="5.12"/><circle cx="418.7" cy="287.9" r="5.12"/><circle cx="256.9" cy="378.2" r="5.12"/><circle cx="313.5" cy="304.0" r="5.12"/><circle cx="281.2" cy="405.6" r="5.12"/><circle cx="329.7" cy="394.3" r="5.12"/><circle cx="232.6" cy="384.6" r="5.12"/><circle cx="256.9" cy="336.3" r="5.12"/><circle cx="265.0" cy="425.0" r="5.12"/><circle cx="337.8" cy="350.8" r="5.12"/><circle cx="216.4" cy="402.4" r="5.12"/><circle cx="281.2" cy="358.8" r="5.12"/><circle cx="281.2" cy="350.8" r="5.12"/><circle cx="232.6" cy="344.3" r="5.12"/><circle cx="240.7" cy="481.4" r="5.12"/><circle cx="256.9" cy="342.7" r="5.12"/><circle cx="273.1" cy="397.6" r="5.12"/><circle cx="216.4" cy="370.1" r="5.12"/><circle cx="256.9" cy="366.9" r="5.12"/><circle cx="208.4" cy="408.8" r="5.12"/><circle cx="297.4" cy="418.5" r="5.12"/><circle cx="281.2" cy="389.5" r="5.12"/><circle cx="232.6" cy="418.5" r="5.12"/><circle cx="345.9" cy="329.8" r="5.12"/></g>
<path fill="#48b4b2" d="M421.7 250.5h10.24v10.24h-10.24zM575.4 187.6h10.24v10.24h-10.24zM413.6 208.5h10.24v10.24h-10.24zM478.3 187.6h10.24v10.24h-10.24zM454.0 226.3h10.24v10.24h-10.24zM413.6 244.0h10.24v10.24h-10.24zM421.7 261.8h10.24v10.24h-10.24zM486.4 240.8h10.24v10.24h-10.24zM405.5 295.7h10.24v10.24h-10.24zM454.0 239.2h10.24v10.24h-10.24zM445.9 334.4h10.24v10.24h-10.24zM462.1 203.7h10.24v10.24h-10.24zM445.9 260.2h10.24v10.24h-10.24zM437.9 213.4h10.24v10.24h-10.24zM413.6 255.3h10.24v10.24h-10.24zM470.2 198.9h10.24v10.24h-10.24zM413.6 316.6h10.24v10.24h-10.24zM502.6 200.5h10.24v10.24h-10.24zM405.5 248.9h10.24v10.24h-10.24zM510.7 208.5h10.24v10.24h-10.24zM478.3 184.4h10.24v10.24h-10.24zM454.0 266.6h10.24v10.24h-10.24zM437.9 244.0h10.24v10.24h-10.24zM454.0 247.3h10.24v10.24h-10.24zM454.0 302.1h10.24v10.24h-10.24zM454.0 250.5h10.24v10.24h-10.24zM462.1 276.3h10.24v10.24h-10.24zM454.0 223.1h10.24v10.24h-10.24zM413.6 216.6h10.24v10.24h-10.24zM494.5 187.6h10.24v10.24h-10.24zM510.7 231.1h10.24v10.24h-10.24zM405.5 303.7h10.24v10.24h-10.24zM389.3 266.6h10.24v10.24h-10.24zM575.4 32.7h10.24v10.24h-10.24zM494.5 202.1h10.24v10.24h-10.24zM494.5 213.4h10.24v10.24h-10.24zM437.9 306.9h10.24v10.24h-10.24zM486.4 277.9h10.24v10.24h-10.24zM397.4 284.4h10.24v10.24h-10.24zM397.4 208.5h10.24v10.24h-10.24zM397.4 305.3h10.24v10.24h-10.24zM534.9 194.0h10.24v10.24h-10.24zM413.6 263.4h10.24v10.24h-10.24zM462.1 194.0h10.24v10.24h-10.24zM510.7 179.5h10.24v10.24h-10.24zM470.2 290.8h10.24v10.24h-10.24zM413.6 260.2h10.24v10.24h-10.24zM534.9 179.5h10.24v10.24h-10.24zM437.9 269.8h10.24v10.24h-10.24zM454.0 265.0h10.24v10.24h-10.24zM413.6 242.4h10.24v10.24h-10.24zM494.5 211.8h10.24v10.24h-10.24zM413.6 266.6h10.24v10.24h-10.24zM534.9 186.0h10.24v10.24h-10.24zM470.2 244.0h10.24v10.24h-10.24zM494.5 268.2h10.24v10.24h-10.24zM397.4 287.6h10.24v10.24h-10.24zM494.5 260.2h10.24v10.24h-10.24zM397.4 297.3h10.24v10.24h-10.24zM526.8 181.1h10.24v10.24h-10.24zM397.4 263.4h10.24v10.24h-10.24zM502.6 248.9h10.24v10.24h-10.24zM445.9 256.9h10.24v10.24h-10.24zM583.5 118.2h10.24v10.24h-10.24zM486.4 255.3h10.24v10.24h-10.24zM575.4 190.8h10.24v10.24h-10.24zM445.9 248.9h10.24v10.24h-10.24zM567.3 195.6h10.24v10.24h-10.24zM494.5 292.4h10.24v10.24h-10.24zM518.8 176.3h10.24v10.24h-10.24zM462.1 224.7h10.24v10.24h-10.24zM502.6 245.6h10.24v10.24h-10.24zM502.6 216.6h10.24v10.24h-10.24zM470.2 244.0h10.24v10.24h-10.24zM462.1 245.6h10.24v10.24h-10.24zM575.4 210.2h10.24v10.24h-10.24zM405.5 227.9h10.24v10.24h-10.24zM494.5 169.8h10.24v10.24h-10.24zM454.0 265.0h10.24v10.24h-10.24zM518.8 265.0h10.24v10.24h-10.24zM429.8 202.1h10.24v10.24h-10.24zM502.6 147.3h10.24v10.24h-10.24zM429.8 229.5h10.24v10.24h-10.24zM526.8 187.6h10.24v10.24h-10.24zM429.8 269.8h10.24v10.24h-10.24zM559.2 174.7h10.24v10.24h-10.24zM478.3 294.0h10.24v10.24h-10.24zM478.3 166.6h10.24v10.24h-10.24zM429.8 227.9h10.24v10.24h-10.24zM575.4 153.7h10.24v10.24h-10.24zM478.3 227.9h10.24v10.24h-10.24zM559.2 152.1h10.24v10.24h-10.24zM429.8 260.2h10.24v10.24h-10.24zM526.8 195.6h10.24v10.24h-10.24zM445.9 276.3h10.24v10.24h-10.24zM543.0 174.7h10.24v10.24h-10.24zM462.1 197.3h10.24v10.24h-10.24zM510.7 237.6h10.24v10.24h-10.24zM356.9 213.4h10.24v10.24h-10.24zM534.9 169.8h10.24v10.24h-10.24zM486.4 211.8h10.24v10.24h-10.24zM559.2 92.4h10.24v10.24h-10.24zM454.0 232.7h10.24v10.24h-10.24zM559.2 202.1h10.24v10.24h-10.24zM462.1 231.1h10.24v10.24h-10.24zM454.0 239.2h10.24v10.24h-10.24zM413.6 321.5h10.24v10.24h-10.24zM486.4 132.7h10.24v10.24h-10.24zM397.4 295.7h10.24v10.24h-10.24zM405.5 218.2h10.24v10.24h-10.24zM567.3 179.5h10.24v10.24h-10.24zM575.4 190.8h10.24v10.24h-10.24zM437.9 292.4h10.24v10.24h-10.24zM575.4 163.4h10.24v10.24h-10.24zM470.2 248.9h10.24v10.24h-10.24zM575.4 105.3h10.24v10.24h-10.24zM470.2 276.3h10.24v10.24h-10.24zM510.7 206.9h10.24v10.24h-10.24zM445.9 232.7h10.24v10.24h-10.24zM454.0 239.2h10.24v10.24h-10.24zM510.7 181.1h10.24v10.24h-10.24zM429.8 265.0h10.24v10.24h-10.24zM437.9 189.2h10.24v10.24h-10.24z"/>
<path fill="#f38ff6" d="M273.1 241.2L280.0 253.1H266.2zM305.4 184.7L312.3 196.7H298.5zM281.2 163.8L288.1 175.7H274.3zM240.7 258.9L247.6 270.9H233.8zM313.5 141.2L320.4 153.1H306.6zM321.6 262.2L328.5 274.1H314.7zM159.8 247.6L166.7 259.6H152.9zM313.5 163.8L320.4 175.7H306.6zM297.4 249.3L304.2 261.2H290.5zM321.6 163.8L328.5 175.7H314.7zM281.2 239.6L288.1 251.5H274.3zM289.3 157.3L296.2 169.3H282.4zM216.4 233.1L223.3 245.1H209.6zM345.9 152.5L352.8 164.4H339.0zM256.9 250.9L263.8 262.8H250.0zM345.9 176.7L352.8 188.6H339.0zM313.5 179.9L320.4 191.8H306.6zM184.1 55.7L191.0 67.6H177.2zM256.9 242.8L263.8 254.7H250.0zM297.4 197.6L304.2 209.6H290.5zM184.1 307.3L191.0 319.3H177.2zM265.0 208.9L271.9 220.9H258.1zM232.6 294.4L239.5 306.4H225.7zM281.2 175.1L288.1 187.0H274.3zM297.4 238.0L304.2 249.9H290.5zM313.5 152.5L320.4 164.4H306.6zM337.8 176.7L344.7 188.6H330.9zM337.8 192.8L344.7 204.7H330.9zM265.0 242.8L271.9 254.7H258.1zM378.2 139.6L385.1 151.5H371.4zM232.6 331.5L239.5 343.5H225.7zM345.9 117.0L352.8 128.9H339.0zM232.6 305.7L239.5 317.7H225.7zM362.1 168.6L369.0 180.6H355.2zM297.4 189.6L304.2 201.5H290.5zM329.7 225.1L336.6 237.0H322.8zM297.4 223.4L304.2 235.4H290.5zM418.7 152.5L425.6 164.4H411.8zM273.1 234.7L280.0 246.7H266.2zM378.2 128.3L385.1 140.2H371.4zM418.7 200.9L425.6 212.8H411.8zM232.6 246.0L239.5 258.0H225.7zM305.4 170.2L312.3 182.2H298.5zM305.4 257.3L312.3 269.3H298.5zM305.4 170.2L312.3 182.2H298.5zM345.9 171.8L352.8 183.8H339.0zM256.9 183.1L263.8 195.1H250.0zM434.9 200.9L441.8 212.8H428.0zM232.6 160.5L239.5 172.5H225.7zM321.6 188.0L328.5 199.9H314.7zM329.7 215.4L336.6 227.3H322.8zM345.9 162.2L352.8 174.1H339.0zM281.2 254.1L288.1 266.0H274.3zM362.1 173.4L369.0 185.4H355.2zM232.6 305.7L239.5 317.7H225.7zM313.5 149.3L320.4 161.2H306.6zM265.0 262.2L271.9 274.1H258.1zM362.1 196.0L369.0 208.0H355.2zM354.0 181.5L360.9 193.5H347.1zM289.3 255.7L296.2 267.7H282.4zM386.3 154.1L393.2 166.0H379.4zM248.8 236.4L255.7 248.3H241.9zM297.4 254.1L304.2 266.0H290.5zM394.4 91.2L401.3 103.1H387.5zM354.0 289.6L360.9 301.5H347.1zM281.2 191.2L288.1 203.1H274.3zM418.7 171.8L425.6 183.8H411.8zM321.6 181.5L328.5 193.5H314.7z"/>
<g fill="#b8b8b8" font-size="24" font-family="Liberation Sans, sans-serif"><text x="73.5" y="362.6" text-anchor="end">40</text><text x="73.5" y="201.3" text-anchor="end">50</text><text x="73.5" y="40.0" text-anchor="end">60</text><text x="95.1" y="533.1" text-anchor="middle">170</text><text x="176.0" y="533.1" text-anchor="middle">180</text><text x="256.9" y="533.1" text-anchor="middle">190</text><text x="337.8" y="533.1" text-anchor="middle">200</text><text x="418.7" y="533.1" text-anchor="middle">210</text><text x="499.6" y="533.1" text-anchor="middle">220</text><text x="580.5" y="533.1" text-anchor="middle">230</text></g>
<g fill="#fff" font-family="Liberation Sans, sans-serif">
<text x="350" y="567" font-size="29.6" text-anchor="middle">Flipper length (mm)</text>
<text transform="translate(34.9 259.9) rotate(-90)" font-size="29.6" text-anchor="middle">Bill length (mm)</text>
<text x="656.5" y="194" font-size="27.5" letter-spacing="0.97">Penguin species</text>
<text x="717" y="243" font-size="23.3">Adelie</text>
<text x="717" y="288.7" font-size="23.3">Chinstrap</text>
<text x="717" y="334.5" font-size="23.3">Gentoo</text>
</g>
<circle cx="679.6" cy="234.2" r="5.42" fill="#e0620c"/>
<path fill="#f38ff6" d="M677.6 272.2L684.5 284.2H670.7z"/>
<path fill="#48b4b2" d="M674.5 321.4h10.24v10.24h-10.24z"/>
</g></svg>
<div class="a" style="left:2218px;top:1014px;width:164px;height:108px;border:2.5px solid #dadada;border-radius:7px;background:#000;overflow:hidden"><svg style="left:0;top:0" width="158" height="102"><use href="#plotg" transform="translate(-0.5 -1) scale(0.1767 0.1775)"/></svg></div>
<!-- /plot -->
<!-- right panel content -->
<div class="a t" style="left:1338px;top:148.5px;font-size:23px;letter-spacing:-0.6px;color:#dcdcdc;-webkit-text-stroke:0.3px #dcdcdc">SESSION</div>
<div class="a" style="left:1334px;top:180px;width:103px;height:2px;background:#2d4866"></div>
<div class="a t" style="left:1480px;top:148.5px;font-size:23px;letter-spacing:-0.6px;color:#9a9a9a;-webkit-text-stroke:0.3px #9a9a9a">HELP</div>
<div class="a t" style="left:1586px;top:148.5px;font-size:23px;letter-spacing:-1px;color:#9a9a9a;-webkit-text-stroke:0.3px #9a9a9a">VIEWER</div>
<div class="a t" style="left:1717px;top:148.5px;font-size:23px;letter-spacing:-0.6px;color:#9a9a9a;-webkit-text-stroke:0.3px #9a9a9a">CONNECTIONS</div>
<div class="a t" style="left:1338px;top:205.5px;font-size:22px;font-weight:bold;color:#d0d0d0">VARIABLES</div>
<div class="a t" style="left:1325px;top:312px;font-size:24.5px;color:#cfcfcf">R 4.3.3</div>
<div class="a" style="left:2085px;top:297.5px;width:294px;height:47px;background:#000;border:2px solid #343a40;border-radius:6px"></div>
<div class="a t" style="left:2102px;top:309.5px;font-size:24.5px;color:#8a8a8a">filter</div>
<div class="a t" style="left:1655px;top:372.5px;font-size:25.5px;letter-spacing:0.73px;color:#d4d4d4">No variables have been created.</div>
<div class="a t" style="left:1338px;top:870px;font-size:22px;font-weight:bold;color:#d0d0d0">PLOTS</div>
<svg style="left:0;top:0" width="2400" height="1000" fill="none" stroke="#c8c8c8" stroke-width="2">
 <path d="M2346 152l17.5 17.5M2363.5 152L2346 169.5"/>
 <path d="M1308 212l9.5 9.5 9.5-9.5M1308 876.5l9.5 9.5 9.5-9.5"/>
 <path d="M1326 252h28M1326 268h28M1326 279h28" stroke-width="2.2"/>
 <rect x="1327" y="256.5" width="6.5" height="6.5" stroke-width="1.8"/><rect x="1337" y="256.5" width="6.5" height="6.5" stroke-width="1.8"/><rect x="1347" y="256.5" width="6.5" height="6.5" stroke-width="1.8"/>
 <rect x="1327" y="271" width="6.5" height="6.5" stroke-width="1.8"/><rect x="1337" y="271" width="6.5" height="6.5" stroke-width="1.8"/><rect x="1347" y="271" width="6.5" height="6.5" stroke-width="1.8"/>
 <path d="M1364.5 262.5h12l-6 7z M1439 262.5h12l-6 7z M1411 317h13l-6.5 7z M2295 925.5h12l-6 6.5z" fill="#c8c8c8" stroke="none"/>
 <path d="M1408 277.5v-21M1401.5 263l6.5-6.5 6.5 6.5M1420 256v21M1413.5 270.5l6.5 6.5 6.5-6.5" stroke-width="2"/>
 <path d="M2305 264a12 12 0 1 1-3-8M2304 249.5v7.5h-7.5M2298 268" stroke-width="2"/>
 <circle cx="2291.5" cy="266" r="5" stroke-width="2"/>
 <path d="M2325.5 254v27M2324.5 919v27" stroke="#3a3a3a"/>
 <path d="M2343 256h28M2343 262.5h28M2343 269h17M2343 275.5h17M2362 268l8 8M2370 268l-8 8"/>
 <path d="M2343 920.5h28M2343 927h28M2343 933.5h17M2343 940h17M2362 932.5l8 8M2370 932.5l-8 8"/>
 <rect x="2257.5" y="919.5" width="8.5" height="23" rx="2"/><rect x="2271" y="919.5" width="9" height="9" rx="2"/><rect x="2271" y="933.5" width="9" height="9" rx="2"/>
 <path d="M1352 924.8V917.5L1337.5 929.7 1352 942V935.5H1361.5a5.35 5.35 0 0 0 0-10.7z" stroke-linejoin="round" stroke-width="1.9"/>
 <path d="M1404 924.8V917.5L1418.5 929.7 1404 942V935.5H1394.5a5.35 5.35 0 0 1 0-10.7z" stroke-linejoin="round" stroke="#8a8a8a" stroke-width="1.9"/>
</svg>
<div class="a" style="left:0;top:0;width:2400px;height:22px;border-top:2px solid #474747;border-left:1px solid #3a3a3a;border-right:1px solid #3a3a3a;border-radius:22px 22px 0 0"></div>
</div>
</body></html>
